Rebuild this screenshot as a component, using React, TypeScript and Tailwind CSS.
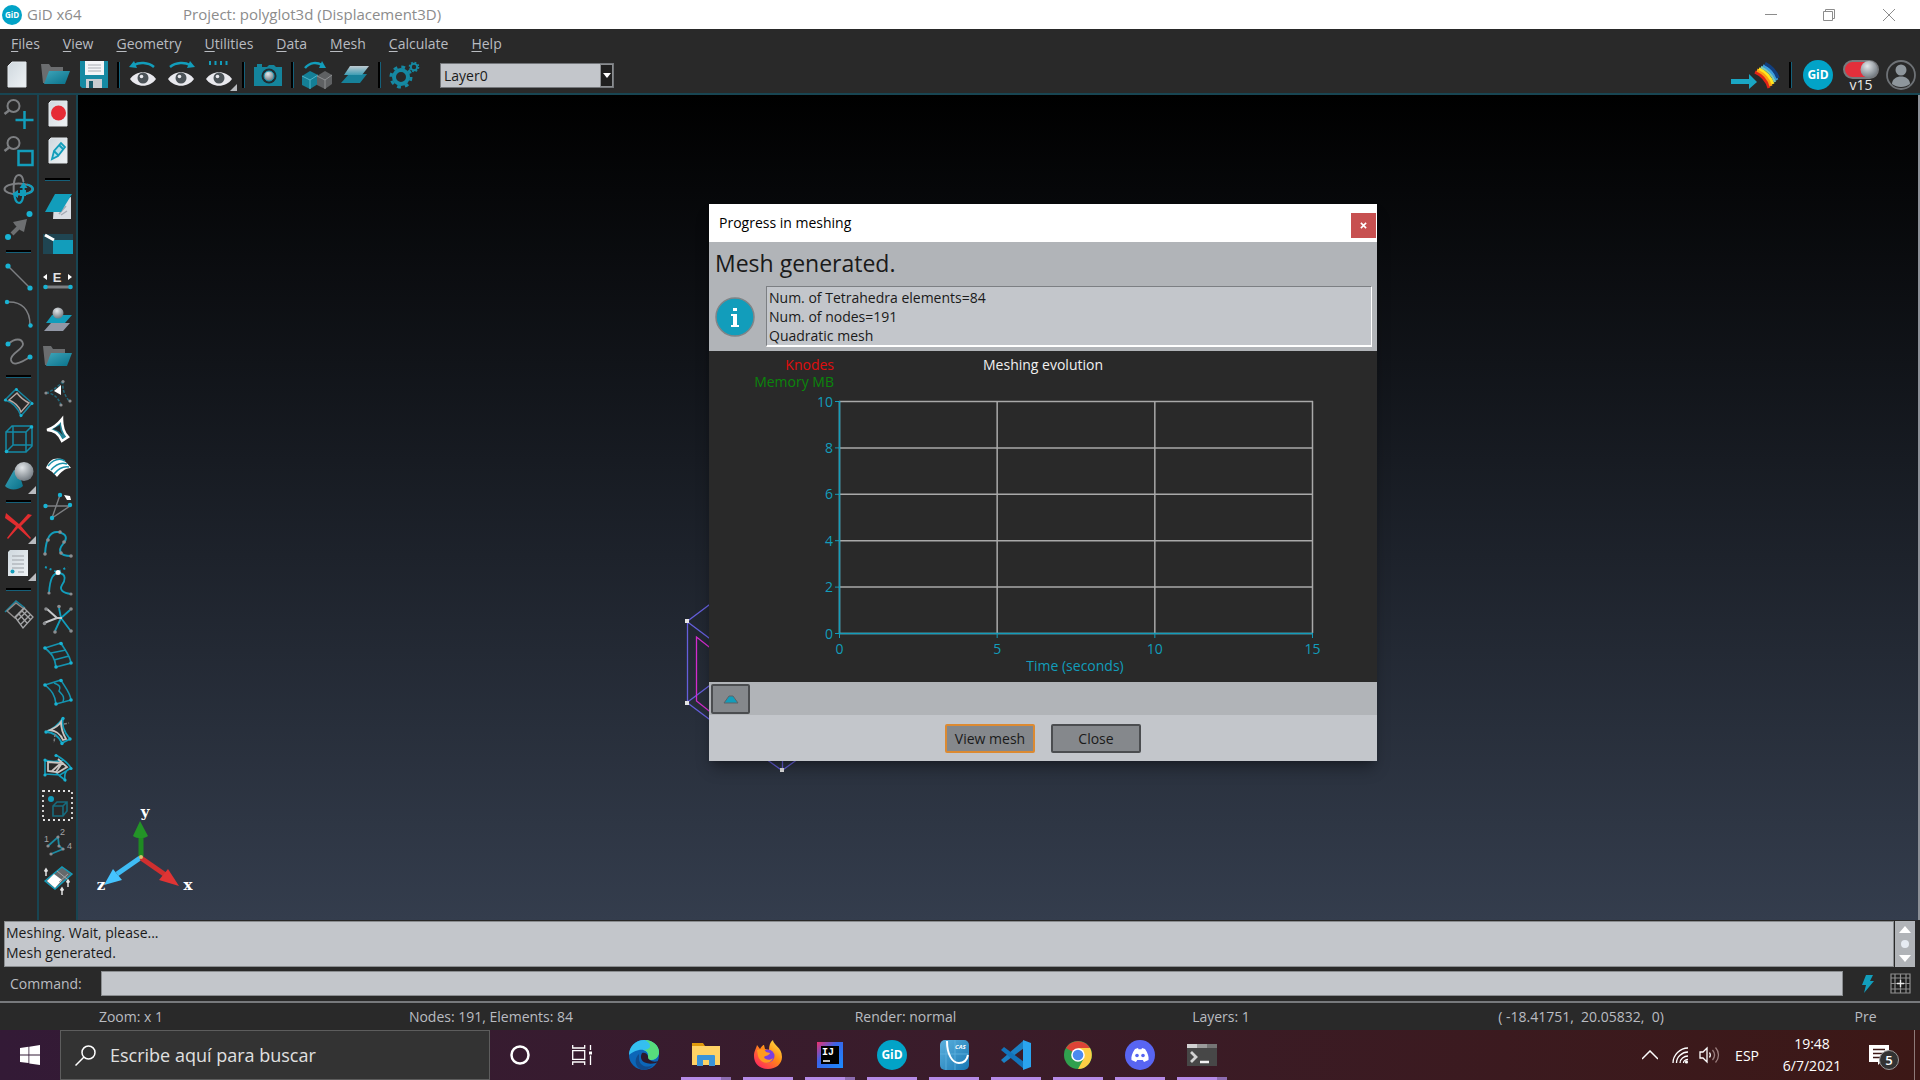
import React from "react";

const T = "#129dbb";
const G = "#7d7f82";

type IconProps = { children: React.ReactNode };

function Icon({ children }: IconProps) {
  return (
    <svg viewBox="0 0 30 30" className="h-[30px] w-[30px] shrink-0 overflow-visible" fill="none" aria-hidden="true">
      {children}
    </svg>
  );
}

function Dots({ p, c = "#19b3d3", r = 2 }: { p: [number, number][]; c?: string; r?: number }) {
  return (
    <>
      {p.map(([x, y]) => (
        <circle key={x + "-" + y} cx={x} cy={y} r={r} fill={c} />
      ))}
    </>
  );
}

const corner = <path d="M32 24v8h-8z" fill="#b9bbbf" />;

const sheet = <path d="M8 2h16v25H6V4z" fill="url(#sheet)" stroke="#e3e8ec" strokeWidth="1" />;

const folder = (
  <>
    <path d="M0 4h8l2 3h12v6H9L5 23H2z" fill="#6b6d6f" />
    <path d="M8 11h21l-5 13H3z" fill="url(#teal)" />
  </>
);

const magnifier = (
  <>
    <circle cx="9.500" cy="7" r="6" stroke={G} strokeWidth="2" />
    <path d="M5 11.500l-4.500 3.500" stroke={G} strokeWidth="2.500" />
  </>
);

type Tool = { name: string; icon: React.ReactNode };

const geometryTools: Tool[][] = [
  [
    {
      name: "Zoom in",
      icon: (
        <>
          {magnifier}
          <path d="M20.500 12v18M11.500 21h18" stroke={T} strokeWidth="2.500" />
        </>
      ),
    },
    {
      name: "Zoom frame",
      icon: (
        <>
          {magnifier}
          <path d="M14.500 15h14v14h-14z" stroke={T} strokeWidth="2.500" />
        </>
      ),
    },
    {
      name: "Rotate trackball",
      icon: (
        <>
          <ellipse cx="14.500" cy="15" rx="14" ry="5.500" stroke={G} strokeWidth="2" />
          <path d="M10 21c-1-10 0-20 5-20 3 0 4 3 4.500 7" stroke={G} strokeWidth="2" />
          <path d="M10 19c1 7 2 10 5 10 4 0 5-8 4.500-18M10 20h12c5-1 7-3 7-5s-3-4-6-4.500" stroke={T} strokeWidth="2.200" />
          <path d="M19.500 8l4 6h-8zM8 20l6-4v8zM16 16h6v6h-6z" fill={T} />
        </>
      ),
    },
    {
      name: "Pan dynamic",
      icon: (
        <>
          <path d="M8 23L19 12" stroke="#6d6f71" strokeWidth="4" />
          <path d="M23 8l-3 13-4-2-5-5-2-3z" fill="#6d6f71" />
          <Dots p={[[4, 26], [25.5, 3]]} r={3} />
        </>
      ),
    },
  ],
  [
    {
      name: "Create line",
      icon: (
        <>
          <path d="M4 4l22 22" stroke={G} strokeWidth="1.500" />
          <Dots p={[[4, 4], [26, 26]]} r={2.6} />
        </>
      ),
    },
    {
      name: "Create arc",
      icon: (
        <>
          <path d="M3 3c15-1 23 8 23 23" stroke={G} strokeWidth="1.500" />
          <Dots p={[[3, 3], [26.5, 26.5]]} r={2.2} />
        </>
      ),
    },
    {
      name: "Create NURBS line",
      icon: (
        <>
          <path d="M4 7c7-6 14-6 15 0 0 6-13 9-12 16 1 6 8 4 19-3" stroke={G} strokeWidth="1.800" />
          <Dots p={[[4, 7], [26, 20]]} r={2.5} />
        </>
      ),
    },
  ],
  [
    {
      name: "Create surface",
      icon: (
        <>
          <path d="M1 13L12 2l16 14-11 13C14 21 8 15 1 13z" stroke="#1785a0" strokeWidth="1.600" />
          <path d="M5 13l8-7c3 4 8 8 12 10l-8 9c-2-6-7-10-12-12z" stroke="#b9a9a5" strokeWidth="1.400" />
          <Dots p={[[12.5, 2.5], [1.5, 13], [28, 16.5], [17, 28.5]]} r={1.5} />
        </>
      ),
    },
    {
      name: "Create volume",
      icon: (
        <>
          <path d="M2 8h20v20H2zM2 8l6-6h20v20l-6 6M22 8l6-6M9 2v19h19M2 28l7-7" stroke="#148aa6" strokeWidth="1.500" />
          <Dots p={[[2.5, 27.5], [27.5, 3]]} r={1.8} />
        </>
      ),
    },
    {
      name: "Create object",
      icon: (
        <>
          <path d="M10 8c2 0 6 5 9 16-4 4-14 5-18 0z" fill="url(#teal)" />
          <circle cx="20" cy="9.500" r="9.500" fill="url(#ball)" />
          {corner}
        </>
      ),
    },
  ],
  [
    {
      name: "Delete",
      icon: (
        <>
          <path d="M2 1l13 11L24 2l4 1-11 11 10 12-1 1-12-11L4 27l-1-1 9-12L1 6z" fill="#e02d2f" />
          {corner}
        </>
      ),
    },
    {
      name: "List entities",
      icon: (
        <>
          <path d="M6 1h18v26H4V3z" fill="url(#sheet)" />
          <path d="M8 7h12M8 11h12M8 15h12M8 19h12M14 23h6" stroke="#b3b8bd" strokeWidth="1.300" />
          <circle cx="8.500" cy="22.500" r="2" fill={T} />
          {corner}
        </>
      ),
    },
  ],
  [
    {
      name: "Generate mesh",
      icon: (
        <>
          <path d="M1 12L12 1l9 7" stroke="#1785a0" strokeWidth="1.500" />
          <path d="M3 11l9-8 8 6-9 9z" stroke="#8f8b8a" strokeWidth="1.400" />
          <path d="M11 17l9-9 9 9-10 11zM14 20l9-9M17 24l9-9M14 13l9 10M17 10l10 10" stroke="#a5a6a8" strokeWidth="1.300" />
        </>
      ),
    },
  ],
];

const curve = "M2 25C3 8 8 2 15 3c10 2 9 7 5 12-5 6-4 12 8 12";

const macroTools: Tool[][] = [
  [
    {
      name: "Record macro",
      icon: (
        <>
          {sheet}
          <circle cx="15.500" cy="14" r="7.500" fill="#e62b35" />
        </>
      ),
    },
    {
      name: "Edit macro",
      icon: (
        <>
          {sheet}
          <path d="M9 23l2-8 7-8 4 4-7 9zM11 15l4 4M16 9l4 4" stroke={T} strokeWidth="1.800" fill="#b5dfe9" />
        </>
      ),
    },
  ],
  [
    {
      name: "Lay surface",
      icon: (
        <>
          <path d="M11 10L28 5v22H10z" fill="#d9dde3" />
          <path d="M16 22l7-8M18 23l6-4" stroke="#a6abb4" strokeWidth="1.500" />
          <path d="M12 2h17L18 20H2z" fill={T} />
        </>
      ),
    },
    {
      name: "Box view",
      icon: (
        <>
          <path d="M0 5h30v20H0z" fill="#1f4552" />
          <path d="M10 11h20v14H10z" fill={T} />
          <path d="M2 6l9 5" stroke="#fff" strokeWidth="3" />
        </>
      ),
    },
    {
      name: "Edge size",
      icon: (
        <>
          <path d="M0 10l4-3v6zM29 10l-4-3v6z" fill="#fff" />
          <text x="14" y="15" textAnchor="middle" fontSize="13" fontWeight="600" fontFamily="Liberation Sans, sans-serif" fill="#e2e2e2">
            E
          </text>
          <path d="M2 20h26" stroke={G} strokeWidth="3" />
          <Dots p={[[2.5, 20], [27.5, 20]]} r={2.3} />
        </>
      ),
    },
    {
      name: "Layer to front",
      icon: (
        <>
          <path d="M8 19h19l-7 8H1z" fill="#9298a6" />
          <path d="M9 11h20l-7 8H3z" fill={T} />
          <circle cx="15" cy="9" r="5.500" fill="url(#ball)" />
        </>
      ),
    },
    { name: "Open layer", icon: folder },
  ],
  [
    {
      name: "Point entities",
      icon: (
        <>
          <path d="M3 14c6-2 12-6 17-12M3 14c7 0 12 4 15 12M20 2c-1 9 2 15 7 21" stroke="#23687a" strokeWidth="1.500" strokeDasharray="3 1.500" />
          <path d="M11 12l7-6v10z" fill="#fff" />
          <Dots p={[[20, 2.5], [3, 14], [27, 22], [18, 26]]} r={1.6} c="#8b8d90" />
        </>
      ),
    },
    {
      name: "Triangular surface",
      icon: (
        <>
          <path d="M19 3c0 8 2 14 6 18l-6 4C16 18 11 14 4 14 10 12 15 8 19 3z" fill="#258396" stroke="#fff" strokeWidth="2.500" />
          <path d="M17 9c0 4 1 7 3 10-3-3-6-5-10-6z" fill="#1f2a2e" />
        </>
      ),
    },
    {
      name: "Striped surface",
      icon: (
        <>
          <path d="M3 14C6 6 11 3 19 5c3 2 6 5 9 9-6 0-10 4-14 9-3-4-7-7-11-9z" fill="#fff" />
          <path d="M5 12c6-7 12-8 17-5M8 16c5-6 11-8 16-6M11 20c5-6 9-8 15-7" stroke="#1890a9" strokeWidth="1.500" />
        </>
      ),
    },
    {
      name: "Swap line",
      icon: (
        <>
          <path d="M3 15h24L9 27 17 4" stroke={G} strokeWidth="1.400" />
          <path d="M21 4l3 5 4 0-1-4z" fill="#fff" />
          <Dots p={[[2.5, 15], [27, 14], [9, 27], [17, 4]]} r={2.2} />
        </>
      ),
    },
    {
      name: "Edit curve",
      icon: (
        <>
          <path d={curve} stroke={T} strokeWidth="2" />
          <Dots p={[[2, 25], [5, 11], [17, 3], [21, 13], [18, 24], [28, 27]]} r={1.8} c="#8b8d90" />
        </>
      ),
    },
    {
      name: "Tangent curve",
      icon: (
        <>
          <path d="M6 27C7 12 10 7 16 7c8 1 6 8 3 12-3 5 1 8 9 9" stroke={T} strokeWidth="1.800" />
          <path d="M2 1l12 5 11-5" stroke={T} strokeWidth="2" strokeDasharray="2 3" />
          <circle cx="15" cy="6.500" r="2.500" fill="#fff" />
          <Dots p={[[6, 27], [28, 28]]} r={1.6} c="#8b8d90" />
        </>
      ),
    },
    {
      name: "Intersect lines",
      icon: (
        <>
          <path d="M18 14l9-8M18 14l-6 13M18 14l9 12M18 14l-2-10" stroke={T} strokeWidth="1.800" />
          <path d="M14 14L4 5M14 14L1 19M14 14h5" stroke="#c6c8ca" strokeWidth="2" />
          <Dots p={[[28, 5], [12, 28], [28, 27], [16, 2.5], [3, 5], [1.5, 19.5]]} r={1.8} c="#8b8d90" />
        </>
      ),
    },
  ],
  [
    {
      name: "Surface by lines",
      icon: (
        <>
          <path d="M2 7l16-5c3 6 9 12 10 20l-15 4C12 17 9 13 2 7zM8 12l15-3M11 19l15-4" stroke="#1593af" strokeWidth="1.700" />
          <Dots p={[[2, 7], [18, 2.5], [28, 22], [13, 26]]} r={1.8} />
        </>
      ),
    },
    {
      name: "Divide surface",
      icon: (
        <>
          <path d="M2 7l16-5c3 6 9 12 10 20l-15 4C12 17 9 13 2 7z" stroke="#1593af" strokeWidth="1.600" />
          <path d="M11 5c6 2 7 4 5 8 3 4 6 5 4 11" stroke="#1593af" strokeWidth="1.500" />
          <Dots p={[[2, 7], [18, 2.5], [28, 22], [13, 26]]} r={1.8} />
        </>
      ),
    },
    {
      name: "Trim surface",
      icon: (
        <>
          <path d="M3 16C10 13 16 8 20 2c-2 8 1 14 7 21l-8 4C15 19 10 16 3 16z" stroke={T} strokeWidth="1.800" />
          <path d="M7 14c5-2 9-5 11-8 0 7 2 12 5 17l-3 1C17 17 13 15 7 14z" stroke="#c9c4c2" strokeWidth="1.800" />
          <path d="M21 8l5-1M12 18l-1 9" stroke={G} strokeWidth="1.500" strokeDasharray="3 1.500" />
          <Dots p={[[20, 2.5], [3, 16], [27, 23], [19, 27.5]]} r={1.7} />
        </>
      ),
    },
    {
      name: "Intersect surfaces",
      icon: (
        <>
          <path d="M2 7c6 2 12 2 18 0M2 21V7M13 2c7 4 12 8 15 13L17 22 2 21M28 15c-6 2-7 6-6 12l-9-7" stroke={T} strokeWidth="1.600" />
          <path d="M5 9l14 1-6 9-8-1zM15 6l9 8-10 6M9 18l9-8" stroke="#c9c4c2" strokeWidth="1.800" />
          <Dots p={[[2, 7], [13, 2.5], [28, 15.5], [2, 22], [22, 27]]} r={1.6} />
        </>
      ),
    },
    {
      name: "Select entities",
      icon: (
        <>
          <path d="M0 0h29v29H0z" stroke="#e2e2e2" strokeWidth="1.800" strokeDasharray="2 3" />
          <path d="M10 15l4-4h10v9l-4 5H10zM10 15h10v10M20 15l4-4" stroke="#176b7e" strokeWidth="1.600" />
          <circle cx="8" cy="8" r="3" fill={T} />
        </>
      ),
    },
    {
      name: "Renumber",
      icon: (
        <>
          <path d="M5 18L15 9l1 9 4 3-12 5" stroke="#1b8aa2" strokeWidth="1.800" />
          <Dots p={[[5, 18], [15, 9], [16, 18], [20, 21], [8, 26]]} r={1.6} c="#8b8d90" />
          <g fontSize="9" fontFamily="Liberation Sans, sans-serif" fill="#a2a4a6">
            <text x="1" y="14">1</text>
            <text x="17" y="7">2</text>
            <text x="24" y="21">4</text>
          </g>
        </>
      ),
    },
    {
      name: "Surface normals",
      icon: (
        <>
          <path d="M2 15L19 1l10 7-17 15z" fill="#66696b" stroke={T} strokeWidth="1.400" />
          <path d="M4 15l7-7 8 6-7 8z" fill="#fff" />
          <path d="M14 5l10 8M16 16l9-8" stroke="#a3a6a8" strokeWidth="1" />
          <path d="M3 10V3M1.500 5.500L3 3l1.500 2.500M25 21v-7M23.500 16.500L25 14l1.500 2.500M19 29v-7M17.500 24.500L19 22l1.500 2.500" stroke="#e2e2e2" strokeWidth="1.500" />
        </>
      ),
    },
  ],
];

const eye = (
  <>
    <path d="M2 19c6-9 20-9 26 0-6 9-20 9-26 0z" fill="#e9e9ee" />
    <circle cx="15" cy="18" r="5.500" fill="#4c5358" />
    <circle cx="13.500" cy="16.500" r="1.800" fill="#e9e9ee" />
  </>
);

const topTools: Tool[][] = [
  [
    { name: "New", icon: <path d="M9 2h14v25H5V6z" fill="url(#sheet)" stroke="#e3e8ec" /> },
    { name: "Open", icon: folder },
    {
      name: "Save",
      icon: (
        <>
          <path d="M1 1h28v27H3l-2-2z" fill="#168aa3" />
          <path d="M6 1h19v14H6z" fill="#f3f5f7" />
          <path d="M9 5h13M9 8h13M9 11h13" stroke="#a9aeb3" strokeWidth="1.200" />
          <path d="M7 19h16v9H7z" fill="#c9ccd1" />
          <path d="M10 21h4v7h-4z" fill="#17596a" />
        </>
      ),
    },
  ],
  [
    {
      name: "View previous",
      icon: (
        <>
          {eye}
          <path d="M26 7C20 2 11 2 6 5" stroke={T} strokeWidth="2.500" />
          <path d="M1 7l5-6 3 7z" fill={T} />
        </>
      ),
    },
    {
      name: "View next",
      icon: (
        <>
          {eye}
          <path d="M4 7c6-5 15-5 20-2" stroke={T} strokeWidth="2.500" />
          <path d="M29 7l-5-6-3 7z" fill={T} />
        </>
      ),
    },
    {
      name: "Saved views",
      icon: (
        <>
          {eye}
          <path d="M6 1v4M11.500 1v4M17 1v4M22.500 1v4" stroke={T} strokeWidth="2" />
          <path d="M33 24v7h-7z" fill="#b9bbbf" />
        </>
      ),
    },
  ],
  [
    {
      name: "Snapshot",
      icon: (
        <>
          <path d="M1 7h3V4h5v3h5l2-2h5l2 2h6v19H1z" fill="#14849c" />
          <circle cx="16" cy="16" r="7.500" fill="#222b30" />
          <circle cx="16" cy="16" r="5" fill="url(#ball)" stroke={T} />
        </>
      ),
    },
  ],
  [
    {
      name: "Toggle geometry or mesh",
      icon: (
        <>
          <path d="M0 16l8-5 8 4v9l-8 5-8-4z" fill="#147f96" />
          <path d="M0 16l8 4 8-5M8 20v9" stroke="#4fb4c9" strokeWidth="1" />
          <path d="M15 16l8-5 7 4v9l-7 5-8-4z" fill="#5f6163" />
          <path d="M15 16l8 4 7-5M23 20v9" stroke="#8f9193" strokeWidth="1" />
          <path d="M3 8c5-6 12-6 17-3" stroke={T} strokeWidth="2.500" />
          <path d="M24 8l-4-7-3 7z" fill={T} />
        </>
      ),
    },
    {
      name: "Layers",
      icon: (
        <>
          <path d="M9 14h18l-7 9H1z" fill="#17819a" />
          <path d="M10 6h19l-7 9H4z" fill="url(#layer)" />
        </>
      ),
    },
  ],
  [
    {
      name: "Preferences",
      icon: (
        <>
          <circle cx="12" cy="17" r="7" stroke="#1588a2" strokeWidth="4" />
          <circle cx="12" cy="17" r="10" stroke="#1588a2" strokeWidth="3" strokeDasharray="3.800 4.054" />
          <circle cx="25" cy="7" r="3.200" stroke="#1588a2" strokeWidth="2" />
          <circle cx="25" cy="7" r="4.600" stroke="#1588a2" strokeWidth="1.500" strokeDasharray="1.800 1.813" />
        </>
      ),
    },
  ],
];

const menus = ["Files", "View", "Geometry", "Utilities", "Data", "Mesh", "Calculate", "Help"];

function SvgDefs() {
  return (
    <svg className="absolute h-0 w-0" aria-hidden="true">
      <defs>
        <linearGradient id="sheet" x1="0" y1="0" x2="1" y2="1">
          <stop offset="0" stopColor="#cfd8de" />
          <stop offset="1" stopColor="#eef2f5" />
        </linearGradient>
        <linearGradient id="teal" x1="0" y1="0" x2="1" y2="1">
          <stop offset="0" stopColor="#3fa5ba" />
          <stop offset="1" stopColor="#087089" />
        </linearGradient>
        <linearGradient id="layer" x1="0" y1="0" x2="0" y2="1">
          <stop offset="0" stopColor="#bfc9d0" />
          <stop offset="1" stopColor="#3d9db4" />
        </linearGradient>
        <radialGradient id="ball" cx="0.400" cy="0.300" r="0.700">
          <stop offset="0" stopColor="#e3e7ea" />
          <stop offset="1" stopColor="#737b82" />
        </radialGradient>
      </defs>
    </svg>
  );
}

function GidLogo({ size }: { size: string }) {
  return (
    <span className={"flex shrink-0 items-center justify-center rounded-full bg-[#02a3c7] font-bold leading-none text-white " + size}>
      GiD
    </span>
  );
}

function TitleBar() {
  return (
    <header className="flex h-[29px] items-center bg-white text-[15px] text-[#8c8c8c]">
      <div className="flex w-[183px] items-center gap-[5px] pl-[2px]">
        <GidLogo size="h-5 w-5 text-[8px]" />
        <h1>GiD x64</h1>
      </div>
      <span>Project: polyglot3d (Displacement3D)</span>
      <div className="ml-auto flex">
        <button aria-label="Minimize" className="flex h-[29px] w-[58px] items-center justify-center">
          <svg viewBox="0 0 12 12" className="h-3 w-3" stroke="#8c8c8c" fill="none"><path d="M0 5.500h12" /></svg>
        </button>
        <button aria-label="Restore" className="flex h-[29px] w-[58px] items-center justify-center">
          <svg viewBox="0 0 12 12" className="h-3 w-3" stroke="#8c8c8c" fill="none"><path d="M.5 2.500h9v9h-9zM2.500 2.500v-2h9v9h-2" /></svg>
        </button>
        <button aria-label="Close window" className="flex h-[29px] w-[62px] items-center justify-center">
          <svg viewBox="0 0 12 12" className="h-3 w-3" stroke="#8c8c8c" fill="none"><path d="M0 0l12 12M12 0L0 12" /></svg>
        </button>
      </div>
    </header>
  );
}

function VSep() {
  return (
    <span className="flex w-[11px] justify-center">
      <span className="h-[26px] w-[3px] border-r border-[#15607a] bg-black" />
    </span>
  );
}

function TopBar() {
  return (
    <div className="border-b-2 border-[#184552] bg-[#292929]">
      <nav className="flex h-[28px] items-center gap-[23px] pl-[11px] text-[14px] text-[#b9bcc1]">
        {menus.map((m) => (
          <button key={m}>
            <span className="underline underline-offset-2">{m[0]}</span>
            {m.slice(1)}
          </button>
        ))}
      </nav>
      <div className="flex h-9 items-center">
        <div className="-ml-px flex items-center">
          {topTools.map((group, i) => (
            <div key={i} className="flex items-center">
              {i > 0 && <VSep />}
              {group.map((t) => (
                <button key={t.name} aria-label={t.name} className="flex w-[38px] justify-center">
                  <Icon>{t.icon}</Icon>
                </button>
              ))}
            </div>
          ))}
        </div>
        <div className="relative ml-[17px] h-[25px] w-[174px] border border-[#73767a] bg-[#c3c6cb]">
          <select aria-label="Layer" className="block h-full w-full appearance-none pl-[3px] text-[14px] text-[#1a1a1a] outline-none">
            <option>Layer0</option>
          </select>
          <span className="pointer-events-none absolute inset-y-0 right-0 flex w-[13px] items-center justify-center border border-[#8a8d90] bg-[#1f1f1f]">
            <svg viewBox="0 0 8 5" className="h-[5px] w-2"><path d="M0 0h8L4 5z" fill="#fff" /></svg>
          </span>
        </div>
        <div className="ml-auto flex items-center pr-1">
          <button aria-label="Go to postprocess">
            <svg viewBox="0 0 50 30" className="h-[30px] w-[50px]" fill="none" aria-hidden="true">
              <path d="M0 19h18v-5l8 8-8 7v-5H0z" fill="#1aa6c4" />
              <path d="M24 12C31 15 36 21 38 28" stroke="#e02418" strokeWidth="3" />
              <path d="M26 10C33 13 38 19 40 26" stroke="#ff9d12" strokeWidth="3" />
              <path d="M28 8.500C35 12 40 18 42 24" stroke="#ffe51f" strokeWidth="3" />
              <path d="M30 7C37 10 42 16 44 22" stroke="#7fc9b0" strokeWidth="2.500" />
              <path d="M32 5.500C39 9 43 14 46 20" stroke="#3b9fe0" strokeWidth="3" />
              <path d="M34 3.500C41 7 45 12 47 18" stroke="#123f7f" strokeWidth="3.500" />
            </svg>
          </button>
          <span className="ml-1 mr-[5px]"><VSep /></span>
          <button aria-label="GiD website" className="mx-[2px]">
            <GidLogo size="h-[30px] w-[30px] text-[12px]" />
          </button>
          <button className="ml-2 mr-[7px] flex w-[36px] flex-col items-center text-[14px] leading-[11px] text-[#e8e8e8]">
            <svg viewBox="0 0 36 19" className="h-[19px] w-9" aria-hidden="true">
              <rect x="1" y="1" width="34" height="17" rx="8.500" fill="#e32f3b" stroke="#77797c" strokeWidth="2" />
              <circle cx="26" cy="9.500" r="8.500" fill="url(#ball)" />
            </svg>
            v15
          </button>
          <button aria-label="User account">
            <svg viewBox="0 0 30 30" className="h-[30px] w-[30px]" fill="none" aria-hidden="true">
              <circle cx="15" cy="15" r="14" stroke="#6e7276" strokeWidth="1.800" />
              <circle cx="15" cy="10" r="5.500" fill="#8e969c" />
              <path d="M6 24c0-10 18-10 18 0-5 4-13 4-18 0z" fill="#8e969c" />
            </svg>
          </button>
        </div>
      </div>
    </div>
  );
}

function SideBar({ groups, label, tall }: { groups: Tool[][]; label: string; tall?: boolean }) {
  return (
    <div role="toolbar" aria-label={label} className="flex w-[39px] shrink-0 flex-col border-r-2 border-[#184552] bg-[#292929]">
      {groups.map((g, i) => (
        <React.Fragment key={i}>
          {i > 0 && (!tall || i === 1) && (
            <span className={"flex items-center justify-center " + (tall ? "h-[18px]" : "h-[13px]")}>
              <span className="h-[3px] w-[25px] border-b border-[#15607a] bg-black" />
            </span>
          )}
          <div className="flex flex-col">
            {g.map((t) => (
              <button key={t.name} aria-label={t.name} className="flex items-center justify-center odd:h-[37px] even:h-[38px]">
                <Icon>{t.icon}</Icon>
              </button>
            ))}
          </div>
        </React.Fragment>
      ))}
    </div>
  );
}

function Scene() {
  return (
    <svg className="absolute inset-0 h-full w-full" fill="none" aria-hidden="true">
      <g stroke="#655fdb" strokeWidth="1.300">
        <path d="M635 507L609 526.500L635 546M609.500 526v82M635 588L609 607.500L635 627M688 664L704 675.500L720 664M704.500 660v15" />
      </g>
      <path d="M635 555L618.500 542v64L635 619" stroke="#d42ccf" strokeWidth="1.300" />
      <g fill="#e4e4e4">
        <rect x="607" y="524" width="4" height="4" />
        <rect x="607" y="606" width="4" height="4" />
        <rect x="702" y="673" width="4" height="4" />
      </g>
      <path d="M63 763V736" stroke="#1f8a22" strokeWidth="5" />
      <path d="M62 726l8 15c-4 3-11 3-15 0z" fill="#239427" />
      <path d="M62 763L39 779" stroke="#3fbcf5" strokeWidth="5" />
      <path d="M26 790l9-16 9 11z" fill="#45c4ff" />
      <path d="M63 763l26 18" stroke="#d02f2f" strokeWidth="5" />
      <path d="M101 791l-11-17-9 11z" fill="#e03434" />
      <circle cx="63" cy="762" r="2" fill="#d8c070" />
      <g fill="#fff" fontSize="15" fontWeight="700" fontFamily="DejaVu Serif, serif" textAnchor="middle">
        <text x="67" y="722">y</text>
        <text x="23" y="795">z</text>
        <text x="110" y="795">x</text>
      </g>
    </svg>
  );
}

const yTicks = [10, 8, 6, 4, 2, 0];
const xTicks = [0, 5, 10, 15];

function Chart() {
  const y = (v: number) => 282.5 - v * 23.2;
  const x = (v: number) => 130.5 + v * 31.533;
  return (
    <svg viewBox="0 0 668 331" className="block h-[331px] w-full bg-[#292929] text-[14px]" role="img" aria-label="Meshing evolution chart">
      <text x="125" y="19" textAnchor="end" fill="#e00d0d">Knodes</text>
      <text x="125" y="36" textAnchor="end" fill="#0b850b">Memory MB</text>
      <text x="334" y="19" textAnchor="middle" fill="#f0f0f0">Meshing evolution</text>
      {yTicks.map((v) => (
        <g key={v}>
          <path d={`M130 ${y(v)}H604`} stroke="#a9a9a9" strokeWidth="1.500" />
          <path d={`M126 ${y(v)}h5`} stroke={T} />
          <text x="124" y={y(v) + 5} textAnchor="end" fill={T}>{v}</text>
        </g>
      ))}
      {xTicks.map((v) => (
        <g key={v}>
          <path d={`M${x(v)} 50V282`} stroke="#a9a9a9" strokeWidth="1.500" />
          <path d={`M${x(v)} 282v5`} stroke={T} />
          <text x={x(v)} y="303" textAnchor="middle" fill={T}>{v}</text>
        </g>
      ))}
      <path d="M130.500 50V282.500H604" stroke={T} strokeWidth="1.500" fill="none" />
      <text x="366" y="320" textAnchor="middle" fill={T}>Time (seconds)</text>
    </svg>
  );
}

function Dialog() {
  return (
    <section role="dialog" aria-label="Progress in meshing" className="absolute left-[631px] top-[109px] w-[668px] bg-[#b1b4b8] text-[#1a1a1a] shadow-lg shadow-black/30">
      <div className="flex h-[38px] items-center bg-white pl-[10px] text-[14px] text-black">
        <h2 className="pb-[2px]">Progress in meshing</h2>
        <button aria-label="Close dialog" className="ml-auto mr-px mt-1 flex h-[25px] w-[25px] items-center justify-center bg-[#c75050]">
          <svg viewBox="0 0 8 8" className="h-[7px] w-[7px]" stroke="#fff" strokeWidth="1.800"><path d="M1 1l6 6M7 1L1 7" /></svg>
        </button>
      </div>
      <p className="px-[6px] pt-1 text-[23px] leading-[35px]">Mesh generated.</p>
      <div className="flex items-center pb-1 pl-[6px] pr-[5px] pt-[5px]">
        <svg viewBox="0 0 40 40" className="h-10 w-10 shrink-0" aria-hidden="true">
          <circle cx="20" cy="20" r="19" fill="#129dbb" stroke="#7f8487" strokeWidth="1.500" />
          <path d="M18 11h4v3h-4zM16 17h6v11h2v2h-8v-2h2v-9h-2z" fill="#fff" />
        </svg>
        <textarea
          readOnly
          aria-label="Mesh result"
          rows={3}
          className="ml-[11px] block h-[61px] flex-1 resize-none overflow-hidden border border-b-2 border-[#7c7f83] border-b-white border-r-white bg-[#c3c6cb] px-[2px] pt-px text-[14px] leading-[19px] outline-none"
          value={"Num. of Tetrahedra elements=84\nNum. of nodes=191\nQuadratic mesh"}
        />
      </div>
      <Chart />
      <div className="flex h-[33px] items-center pl-[2px]">
        <button aria-label="Hide chart" className="flex h-[30px] w-[39px] items-center justify-center rounded-xs border-2 border-[#4b4d50] bg-[#85888c]">
          <svg viewBox="0 0 16 10" className="h-[10px] w-4"><path d="M1 9l5-7h4l5 7z" fill="#129dbb" stroke="#5f6366" /></svg>
        </button>
      </div>
      <div className="flex h-[46px] items-center justify-center gap-4 bg-[#c3c6cb] text-[14px]">
        <button className="h-[29px] w-[90px] rounded-xs border-2 border-[#dc8a32] bg-[#85888c]">View mesh</button>
        <button className="h-[29px] w-[90px] rounded-xs border-2 border-[#4b4d50] bg-[#85888c]">Close</button>
      </div>
    </section>
  );
}

function Console() {
  return (
    <div className="bg-[#292929] pt-px text-[14px] text-[#b9bcc1]">
      <div className="flex h-[46px] pl-1 pr-[5px]">
        <textarea
          readOnly
          aria-label="Messages"
          rows={2}
          className="block h-full flex-1 resize-none overflow-hidden border border-[#8a8d90] bg-[#c3c6cb] px-px pt-px leading-5 text-[#1a1a1a] outline-none"
          value={"Meshing. Wait, please...\nMesh generated."}
        />
        <div className="ml-px flex w-5 flex-col items-center justify-between bg-[#b1b4b8] py-[5px]">
          <svg viewBox="0 0 12 7" className="h-[7px] w-3"><path d="M0 7h12L6 0z" fill="#fff" /></svg>
          <span className="h-2 w-2 rounded-full bg-[#e6ebf2]" />
          <svg viewBox="0 0 12 7" className="h-[7px] w-3"><path d="M0 0h12L6 7z" fill="#fff" /></svg>
        </div>
      </div>
      <div className="flex h-[33px] items-center pl-[10px]">
        <label htmlFor="command" className="w-[91px]">Command:</label>
        <input id="command" className="h-[25px] flex-1 border border-[#8a8d90] bg-[#c3c6cb] px-1 text-[#1a1a1a] outline-none" />
        <button aria-label="Quick command" className="ml-[18px] w-4">
          <svg viewBox="0 0 14 18" className="h-[18px] w-[14px]"><path d="M5 0h7L9 6h4L3 18l2-8H1z" fill="#129dbb" /></svg>
        </button>
        <button aria-label="Grid" className="ml-[13px] mr-[9px]">
          <svg viewBox="0 0 21 21" className="h-[21px] w-[21px]" stroke="#8f8f8f" strokeWidth="1.200" fill="#1d1d1d">
            <path d="M1 1h19v19H1z" />
            <path d="M5 1v19M10.500 1v19M16 1v19M1 5h19M1 10.500h19M1 16h19" />
            <path d="M10.500 7v7M7 10.500h7" stroke="#e8e8e8" strokeWidth="1.300" />
          </svg>
        </button>
      </div>
      <div className="mt-px h-[2px] bg-[#77797c]" />
      <div className="grid h-[27px] grid-cols-[262fr_458fr_371fr_260fr_460fr_109fr] items-center whitespace-pre text-center">
        <span>Zoom: x 1</span>
        <span>Nodes: 191, Elements: 84</span>
        <span>Render: normal</span>
        <span>Layers: 1</span>
        <span>{"( -18.41751,  20.05832,  0)"}</span>
        <span>Pre</span>
      </div>
    </div>
  );
}

type TaskApp = { name: string; open: 0 | 1 | 2; art: React.ReactNode };

const apps: TaskApp[] = [
  {
    name: "Microsoft Edge",
    open: 0,
    art: (
      <>
        <circle cx="15" cy="15" r="15" fill="#0c66b8" />
        <path d="M0 15C0 7 6 0 15 0s15 6 15 12c0 5-4 8-8 8-3 0-4-1-3-3 1-6-5-8-9-7C5 11 1 14 0 15z" fill="#35bff0" />
        <path d="M16 0c8 0 14 6 14 12 0 5-4 8-8 8-3 0-4-1-3-3 1-4-1-6-4-7 8-1 8-6 1-10z" fill="#57dc7c" />
        <path d="M10 17c-1 8 7 12 14 8-3 4-8 5-10 5C5 28 5 18 10 14z" fill="#114a8b" />
        <path d="M13 13c-3 5 0 13 14 10 0 0 2-1 2-2-2 1-6 1-8-1-2-1-2-2-2-4-1-3-4-4-6-3z" fill="#2c1a2d" />
      </>
    ),
  },
  {
    name: "File Explorer",
    open: 2,
    art: (
      <>
        <path d="M1 3h11l2 3h-1v5H1z" fill="#e09a0c" />
        <path d="M1 6h28v19H1z" fill="#ffd265" />
        <path d="M6 26V16c0-1 1-1 1-1h16s1 0 1 1v10h-6v-6h-6v6z" fill="#3b94d9" />
      </>
    ),
  },
  {
    name: "Firefox",
    open: 1,
    art: (
      <>
        <path d="M15 29C6 29 1 23 1 16 1 11 3 9 4 5l3 4c1-2 3-4 4-4l1 4 4 1c0-4 1-8 4-10 0 5 9 7 9 17 0 7-6 12-14 12z" fill="url(#fox)" />
        <circle cx="15" cy="16" r="6.500" fill="#7a3fe0" />
        <path d="M4 10c5-2 8 0 9 2l4 1c-1 3-4 2-6 4 1 3 6 4 9 1-2 7-13 6-15-2z" fill="#ff9a1f" />
      </>
    ),
  },
  {
    name: "IntelliJ IDEA",
    open: 2,
    art: (
      <>
        <path d="M2 2h26v26H2z" fill="url(#ij)" />
        <path d="M6 6h18v18H6z" fill="#000" />
        <text x="7" y="15" fontSize="10" fontWeight="700" fontFamily="Liberation Mono, monospace" fill="#fff">IJ</text>
        <path d="M8 21h7" stroke="#fff" strokeWidth="1.500" />
      </>
    ),
  },
  {
    name: "GiD",
    open: 1,
    art: (
      <>
        <circle cx="15" cy="15" r="15" fill="#02a3c7" />
        <text x="15" y="19" textAnchor="middle" fontSize="12" fontWeight="700" fill="#fff">GiD</text>
      </>
    ),
  },
  {
    name: "GeoGebra CAS",
    open: 1,
    art: (
      <>
        <rect x="1" y="0" width="29" height="30" rx="5" fill="url(#cas)" />
        <path d="M7 0v30M16 0v30M1 14h28" stroke="#5fb2e0" strokeWidth="0.800" />
        <path d="M8 1c0 13 5 22 12 22 5 0 8-3 9-8" stroke="#fff" strokeWidth="2" fill="none" />
        <text x="16" y="9" fontSize="6" fontWeight="700" fontStyle="italic" fill="#fff">CAS</text>
      </>
    ),
  },
  {
    name: "Visual Studio Code",
    open: 1,
    art: (
      <>
        <path d="M22 1L0 20l3 3L23 8z" fill="#1b80c4" />
        <path d="M0 10l3-3 20 15v7z" fill="#1273ba" />
        <path d="M22 0l8 3v24l-8 3z" fill="#2aa4ef" />
      </>
    ),
  },
  {
    name: "Google Chrome",
    open: 1,
    art: (
      <>
        <circle cx="15" cy="15" r="14" fill="#30a04e" />
        <path d="M15 15L3 8a14 14 0 0 1 24 0z" fill="#dc4437" />
        <path d="M15 8h12c5 9-1 21-12 21l6-11z" fill="#fdce45" />
        <circle cx="15" cy="15" r="6.800" fill="#fff" />
        <circle cx="15" cy="15" r="5.300" fill="#4a8af0" />
      </>
    ),
  },
  {
    name: "Discord",
    open: 1,
    art: (
      <>
        <circle cx="15" cy="15" r="15" fill="#5865f2" />
        <path d="M10 9l3-1 .5 1.200h3L17 8l3 1c3 4 4 8 3.500 11L19 22l-1.200-2h-5.600L11 22l-4.500-2C6 17 7 13 10 9z" fill="#fff" />
        <circle cx="12" cy="15.500" r="1.800" fill="#5865f2" />
        <circle cx="18" cy="15.500" r="1.800" fill="#5865f2" />
      </>
    ),
  },
  {
    name: "Terminal",
    open: 2,
    art: (
      <>
        <path d="M0 4h30v22H0z" fill="#474747" />
        <path d="M0 4h10v4H0z" fill="#d2d2d2" />
        <path d="M10 4h10v4H10z" fill="#9b9b9b" />
        <path d="M20 4h10v4H20z" fill="#757575" />
        <path d="M4 12l5 5-5 5" stroke="#d2d2d2" strokeWidth="2.800" fill="none" />
        <path d="M13 22h9" stroke="#f2f2f2" strokeWidth="2.500" />
      </>
    ),
  },
];

function Taskbar() {
  return (
    <footer className="flex h-[50px] items-stretch bg-linear-to-r from-[#331a36] via-[#3a1c2a] to-[#3c1816] text-white">
      <svg className="absolute h-0 w-0" aria-hidden="true">
        <defs>
          <linearGradient id="fox" x1="1" y1="0" x2="0.200" y2="1">
            <stop offset="0" stopColor="#fff14a" />
            <stop offset="0.500" stopColor="#ff8a16" />
            <stop offset="1" stopColor="#ff2560" />
          </linearGradient>
          <linearGradient id="ij" x1="0" y1="0" x2="1" y2="1">
            <stop offset="0" stopColor="#f0306c" />
            <stop offset="0.400" stopColor="#3a63e8" />
            <stop offset="1" stopColor="#1a8cff" />
          </linearGradient>
          <linearGradient id="cas" x1="0" y1="0" x2="1" y2="1">
            <stop offset="0" stopColor="#5cb0dd" />
            <stop offset="1" stopColor="#1878b4" />
          </linearGradient>
        </defs>
      </svg>
      <button aria-label="Start" className="flex w-[60px] items-center justify-center">
        <svg viewBox="0 0 20 20" className="h-5 w-5" fill="#fff"><path d="M0 3l8.500-1.200v7.700H0zM9.300 1.700L20 0v9.500H9.300zM0 10.400h8.500v7.700L0 17zM9.300 10.400H20V20L9.300 18.400z" /></svg>
      </button>
      <div className="flex w-[430px] items-center border border-[#5d5d5d] bg-[#333333] pl-[14px]">
        <svg viewBox="0 0 21 21" className="h-[21px] w-[21px]" stroke="#fff" strokeWidth="1.500" fill="none" aria-hidden="true">
          <circle cx="13.500" cy="7.500" r="6.500" />
          <path d="M9 12l-8.500 8.500" />
        </svg>
        <input aria-label="Buscar" placeholder="Escribe aquí para buscar" className="ml-[14px] flex-1 text-[18px] outline-none placeholder:text-[#e0e0e0]" />
      </div>
      <button aria-label="Cortana" className="flex w-[60px] items-center justify-center">
        <svg viewBox="0 0 20 20" className="h-5 w-5"><circle cx="10" cy="10" r="8.500" stroke="#fff" strokeWidth="2.500" fill="none" /></svg>
      </button>
      <button aria-label="Task view" className="flex w-[63px] items-center justify-center">
        <svg viewBox="0 0 20 20" className="h-5 w-5" stroke="#fff" strokeWidth="1.300" fill="none">
          <path d="M.7 5.700h12v8.600h-12zM.7 0v3h12V0M.7 20v-3h12v3M18.500 0v5M18.500 10.500V20" />
          <path d="M17 6.500h3v3h-3z" fill="#fff" stroke="none" />
        </svg>
      </button>
      {apps.map((a) => (
        <button key={a.name} aria-label={a.name} className="relative flex w-[62px] items-center justify-center">
          <svg viewBox="0 0 30 30" className="h-[30px] w-[30px]" aria-hidden="true">{a.art}</svg>
          {a.open > 0 && (
            <span className="absolute inset-x-[6px] bottom-0 flex h-[3px] bg-[#b58ae6]">
              {a.open === 2 && <span className="ml-auto w-[10px] bg-[#8c6cb0]" />}
            </span>
          )}
        </button>
      ))}
      <div className="ml-auto flex items-center">
        <button aria-label="Hidden icons">
          <svg viewBox="0 0 16 10" className="h-[10px] w-4" stroke="#fff" strokeWidth="1.500" fill="none"><path d="M0 9l8-8 8 8" /></svg>
        </button>
        <button aria-label="Network" className="ml-[14px]">
          <svg viewBox="0 0 17 17" className="h-[17px] w-[17px]" stroke="#fff" strokeWidth="1.300" fill="none">
            <path d="M1 16C1 8 8 1 16 1M4.500 16C4.500 10 10 5 16 5M8 16c0-4 4-7 8-7M11.500 16c0-2 2-3.500 4.500-3.500" />
            <circle cx="14.500" cy="15" r="1.600" fill="#fff" stroke="none" />
          </svg>
        </button>
        <button aria-label="Volume" className="ml-[10px]">
          <svg viewBox="0 0 21 18" className="h-[18px] w-[21px]" stroke="#fff" strokeWidth="1.300" fill="none">
            <path d="M1 6h3l4-4v14l-4-4H1zM10.500 6.500c1 1.500 1 3.500 0 5" />
            <path d="M13.500 4c2.500 3 2.500 7 0 10M16.500 1.500c4 4.500 4 10.500 0 15" stroke="#9a7d7d" />
          </svg>
        </button>
        <button className="ml-[15px] text-[14px]">ESP</button>
        <button className="ml-[22px] w-[62px] whitespace-nowrap text-center text-[14px] leading-[22px]">
          19:48
          <br />
          6/7/2021
        </button>
        <button aria-label="Notifications" className="relative ml-[26px] h-[30px] w-[30px]">
          <svg viewBox="0 0 20 20" className="h-5 w-5" fill="none"><path d="M0 0h20v17h-8l-3 3v-3H0z" fill="#fff" /><path d="M4 4.500h12M4 8.500h12M4 12.500h7" stroke="#3c1816" strokeWidth="1.300" /></svg>
          <span className="absolute bottom-0 right-0 flex h-5 w-5 items-center justify-center rounded-full border border-[#9a9a9a] bg-[#333333] text-[13px] font-semibold leading-none">5</span>
        </button>
        <span className="ml-[15px] mr-[5px] h-[50px] w-px bg-[#8e7a79]" />
      </div>
    </footer>
  );
}

export default function App() {
  return (
    <div className="flex min-h-screen flex-col bg-[#292929] font-['Open_Sans','Noto_Sans',sans-serif] leading-normal">
      <SvgDefs />
      <TitleBar />
      <TopBar />
      <main className="flex flex-1">
        <SideBar groups={geometryTools} label="Geometry tools" />
        <SideBar groups={macroTools} label="Macros" tall />
        <div className="relative flex-1 overflow-hidden border-r-2 border-[#8b8f96] bg-linear-to-b/srgb from-black to-[#343d4d]">
          <Scene />
          <Dialog />
        </div>
      </main>
      <Console />
      <Taskbar />
    </div>
  );
}
